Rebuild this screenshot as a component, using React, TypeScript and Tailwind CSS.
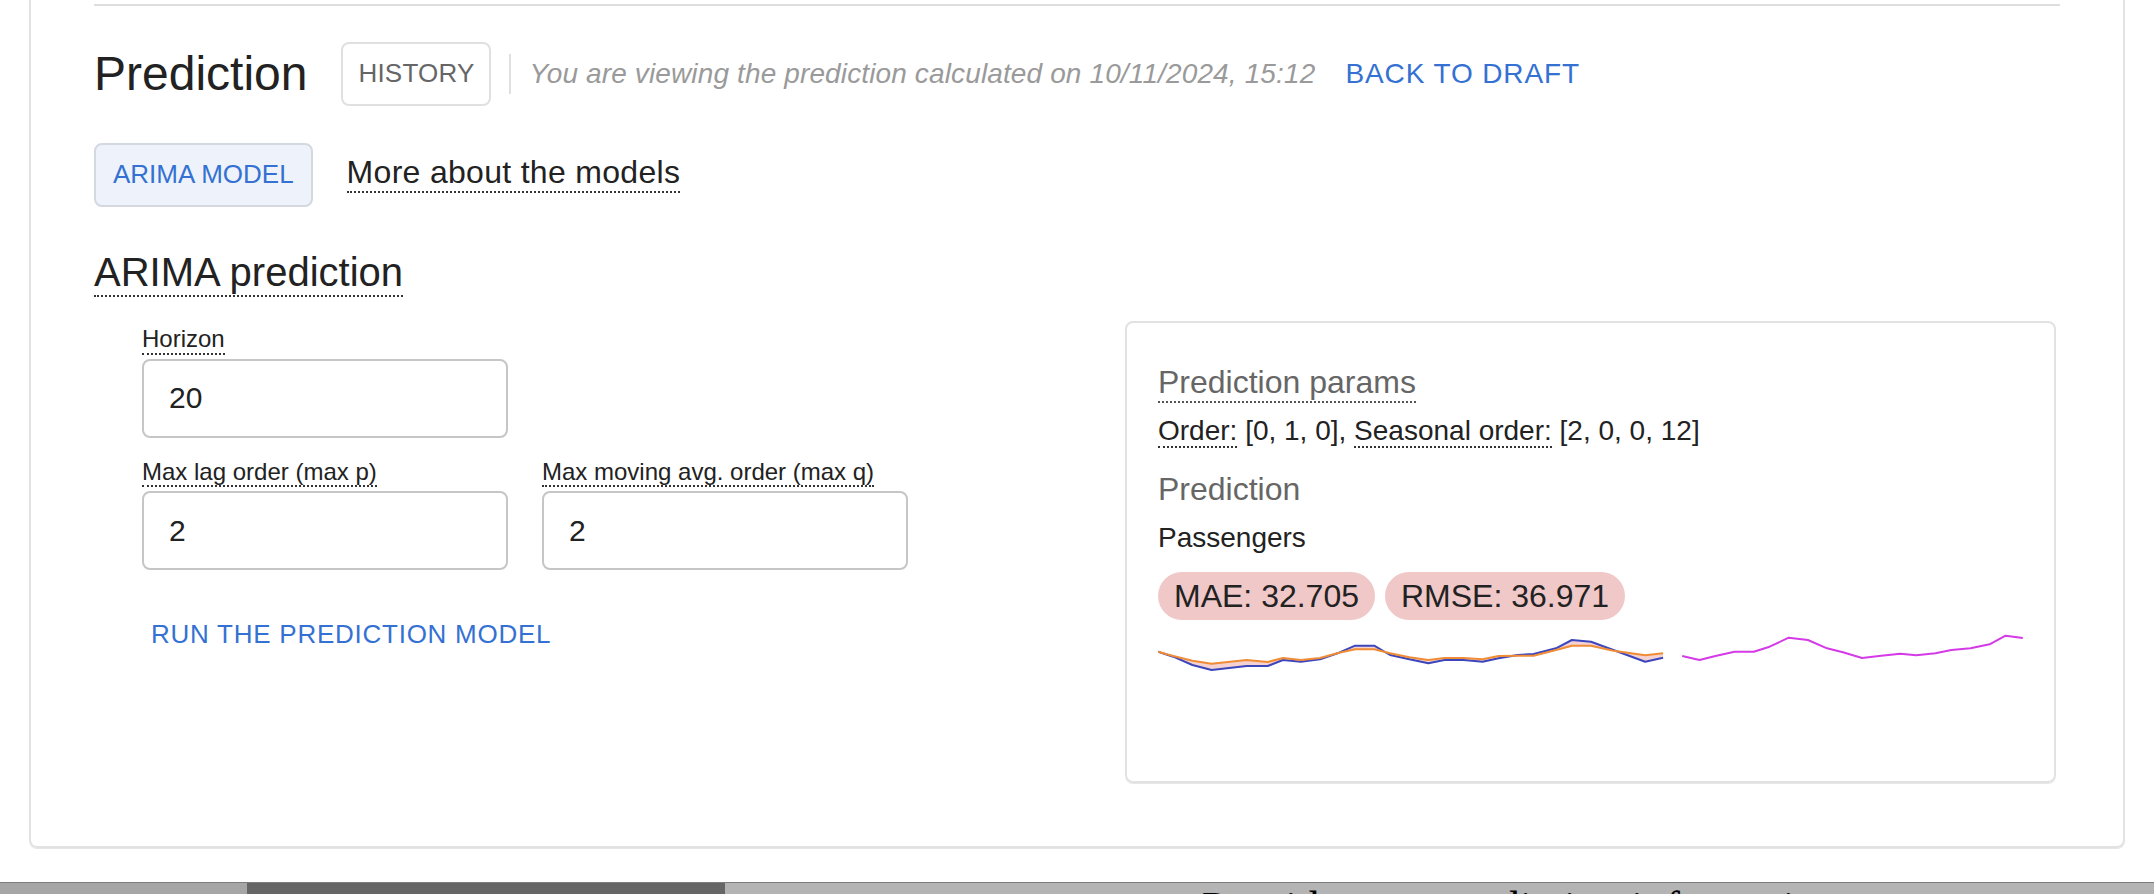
const blue: [number, number][] = [
  [76, 155], [100, 170], [130, 195], [160, 210], [215, 198], [248, 198], [272, 180], [300, 185],
  [330, 178], [360, 158], [385, 137], [415, 137], [440, 165], [470, 178], [500, 190], [525, 180],
  [555, 180], [585, 185], [610, 175], [640, 165], [665, 162], [700, 145], [725, 120], [755, 125],
  [790, 150], [840, 185], [868, 173],
];

const orange: [number, number][] = [
  [76, 155], [100, 168], [130, 182], [160, 191], [215, 180], [248, 186], [272, 174], [300, 180],
  [330, 174], [360, 158], [385, 148], [415, 148], [440, 160], [470, 172], [500, 180], [525, 174],
  [555, 174], [585, 178], [610, 168], [640, 167], [665, 167], [700, 150], [725, 137], [755, 137],
  [790, 152], [840, 166], [868, 160],
];

const purple: [number, number][] = [
  [898, 168], [925, 180], [950, 168], [980, 155], [1010, 155], [1035, 140], [1065, 113], [1095, 120],
  [1125, 145], [1150, 157], [1180, 174], [1210, 167], [1240, 161], [1265, 166], [1295, 160],
  [1320, 150], [1350, 145], [1380, 133], [1405, 107], [1432, 114],
];

// scale traced points to the svg box
const pt = ([x, y]: [number, number]) => `${((x - 76) / 1.568).toFixed(1)},${(y / 3 - 28).toFixed(1)}`;
const line = (p: [number, number][]) => p.map(pt).join(" ");

function Chart() {
  return (
    <svg width="866" height="120" viewBox="0 0 866 120" className="mt-[8px] block">
      <polygon points={line(blue) + " " + line([...orange].reverse())} fill="#f4d2d2" />
      <polyline points={line(blue)} fill="none" stroke="#3b46bd" strokeWidth="2" strokeLinejoin="round" />
      <polyline points={line(orange)} fill="none" stroke="#f08c36" strokeWidth="2" strokeLinejoin="round" />
      <polyline points={line(purple)} fill="none" stroke="#d43ae6" strokeWidth="2" strokeLinejoin="round" />
    </svg>
  );
}

function Field({ label, value }: { label: string; value: string }) {
  return (
    <div className="flex flex-col items-start">
      <span className="border-b-2 border-dotted border-[#333] text-[24px]">{label}</span>
      <input
        readOnly
        value={value}
        className="mt-[4px] h-[79px] w-[366px] rounded-[8px] border-2 border-[#c6c6c6] pl-[25px] text-[30px] text-[#222] outline-none"
      />
    </div>
  );
}

export default function App() {
  return (
    <div className="min-h-screen bg-white font-['Liberation_Sans',Arial,sans-serif] leading-[1.15] text-[#222]">
      <div className="mx-[29px] rounded-b-[8px] border-2 border-t-0 border-[#e2e2e2] px-[63px] pt-[4px] pb-[63px] shadow-[0_1px_0_#e6e6e6]">
        <div className="h-[2px] bg-[#dedede]" />

        {/* header */}
        <div className="mt-[36px] flex h-[64px] items-center">
          <h2 className="text-[48px]">Prediction</h2>
          <button className="ml-[34px] h-[64px] rounded-[8px] border-2 border-[#e0e0e0] px-[15px] text-[26px] tracking-[0.2px] text-[#666]">
            HISTORY
          </button>
          <div className="ml-[18px] h-[40px] w-[2px] bg-[#e0e0e0]" />
          <span className="ml-[18px] text-[28px] italic tracking-[0.13px] text-[#9a9a9a]">
            You are viewing the prediction calculated on 10/11/2024, 15:12
          </span>
          <button className="ml-[14px] px-[16px] text-[28px] tracking-[0.9px] text-[#3471d2]">BACK TO DRAFT</button>
        </div>

        {/* models */}
        <div className="mt-[37px] flex items-baseline">
          <button className="h-[64px] rounded-[8px] border-2 border-[#d4d8e0] bg-[#eef3fb] px-[17px] text-[26px] text-[#3471d2]">
            ARIMA MODEL
          </button>
          <span className="ml-[34px] border-b-2 border-dotted border-[#333] text-[32px] tracking-[0.3px]">
            More about the models
          </span>
        </div>

        <div className="mt-[42px]">
          <h3 className="inline-block border-b-2 border-dotted border-[#333] text-[40px]">ARIMA prediction</h3>
        </div>

        <div className="mt-[24px] flex items-start">
          {/* form */}
          <div className="w-[1031px] pt-[4px] pl-[48px]">
            <Field label="Horizon" value="20" />
            <div className="mt-[20px] flex gap-[34px]">
              <Field label="Max lag order (max p)" value="2" />
              <Field label="Max moving avg. order (max q)" value="2" />
            </div>
            <button className="mt-[42px] px-[9px] py-[8px] text-[26px] tracking-[0.75px] text-[#3471d2]">
              RUN THE PREDICTION MODEL
            </button>
          </div>

          {/* result */}
          <div className="w-[931px] rounded-[8px] border-2 border-[#e2e2e2] px-[31px] pt-[41px] pb-[33px] shadow-[0_1px_0_#e6e6e6]">
            <h4 className="inline-block border-b-2 border-dotted border-[#555] text-[32px] text-[#666]">
              Prediction params
            </h4>
            <p className="mt-[12px] text-[28px]">
              <span className="border-b-2 border-dotted border-[#333]">Order:</span> [0, 1, 0],{" "}
              <span className="border-b-2 border-dotted border-[#333]">Seasonal order:</span> [2, 0, 0, 12]
            </p>
            <h4 className="mt-[24px] text-[32px] text-[#666]">Prediction</h4>
            <p className="mt-[14px] text-[28px]">Passengers</p>
            <div className="mt-[18px] flex gap-[10px]">
              <span className="flex h-[48px] items-center rounded-full bg-[#f0c8c8] px-[16px] text-[32px]">MAE: 32.705</span>
              <span className="flex h-[48px] items-center rounded-full bg-[#f0c8c8] px-[16px] text-[32px]">RMSE: 36.971</span>
            </div>
            <Chart />
          </div>
        </div>
      </div>

      {/* next window peeking in below */}
      <div className="mt-[34px] flex h-[12px] overflow-hidden border-t border-[#7d7d7d]">
        <div className="w-[247px] bg-[#a6a6a6]" />
        <div className="w-[478px] bg-[#666]" />
        <div className="flex-1 bg-[#b4b4b4] pl-[477px]">
          <span className="block font-['Liberation_Serif',serif] text-[44px] whitespace-nowrap text-black">
            Provide your prediction information
          </span>
        </div>
      </div>
    </div>
  );
}
